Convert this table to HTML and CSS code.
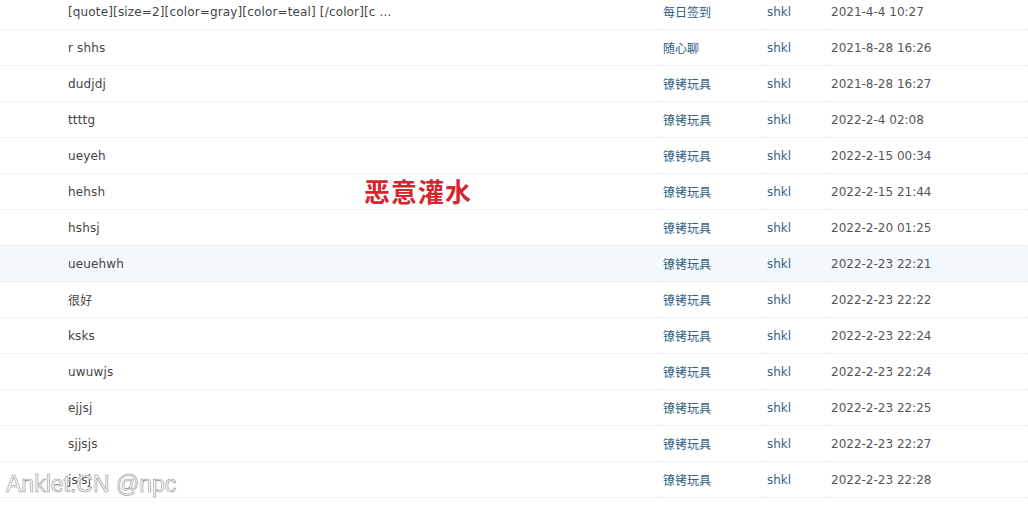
FILE: index.html
```html
<!DOCTYPE html>
<html lang="zh-CN">
<head>
  <meta charset="UTF-8">
  <title>帖子列表</title>
  <link rel="stylesheet" href="styles.css">
</head>
<body>
  <div class="wrap">
    <table class="threads">
      <tbody>
        <tr><td class="subject">[quote][size=2][color=gray][color=teal] [/color][c ...</td><td class="forum">每日签到</td><td class="author">shkl</td><td class="date">2021-4-4 10:27</td></tr>
        <tr><td class="subject">r shhs</td><td class="forum">随心聊</td><td class="author">shkl</td><td class="date">2021-8-28 16:26</td></tr>
        <tr><td class="subject">dudjdj</td><td class="forum">镣铐玩具</td><td class="author">shkl</td><td class="date">2021-8-28 16:27</td></tr>
        <tr><td class="subject">ttttg</td><td class="forum">镣铐玩具</td><td class="author">shkl</td><td class="date">2022-2-4 02:08</td></tr>
        <tr><td class="subject">ueyeh</td><td class="forum">镣铐玩具</td><td class="author">shkl</td><td class="date">2022-2-15 00:34</td></tr>
        <tr><td class="subject">hehsh</td><td class="forum">镣铐玩具</td><td class="author">shkl</td><td class="date">2022-2-15 21:44</td></tr>
        <tr><td class="subject">hshsj</td><td class="forum">镣铐玩具</td><td class="author">shkl</td><td class="date">2022-2-20 01:25</td></tr>
        <tr class="hover"><td class="subject">ueuehwh</td><td class="forum">镣铐玩具</td><td class="author">shkl</td><td class="date">2022-2-23 22:21</td></tr>
        <tr><td class="subject">很好</td><td class="forum">镣铐玩具</td><td class="author">shkl</td><td class="date">2022-2-23 22:22</td></tr>
        <tr><td class="subject">ksks</td><td class="forum">镣铐玩具</td><td class="author">shkl</td><td class="date">2022-2-23 22:24</td></tr>
        <tr><td class="subject">uwuwjs</td><td class="forum">镣铐玩具</td><td class="author">shkl</td><td class="date">2022-2-23 22:24</td></tr>
        <tr><td class="subject">ejjsj</td><td class="forum">镣铐玩具</td><td class="author">shkl</td><td class="date">2022-2-23 22:25</td></tr>
        <tr><td class="subject">sjjsjs</td><td class="forum">镣铐玩具</td><td class="author">shkl</td><td class="date">2022-2-23 22:27</td></tr>
        <tr><td class="subject">jsjsj</td><td class="forum">镣铐玩具</td><td class="author">shkl</td><td class="date">2022-2-23 22:28</td></tr>
      </tbody>
    </table>
    <div class="tag">恶意灌水</div>
    <div class="mark">Anklet.CN @npc</div>
  </div>
</body>
</html>
```

FILE: styles.css
```css
body {
  margin: 0;
  background: #fff;
  font-family: "DejaVu Sans", "Noto Sans CJK SC", sans-serif;
  font-size: 12px;
  overflow: hidden;
}
.wrap {
  position: relative;
  margin-top: -6px;
}
.threads {
  width: 100%;
  border-collapse: collapse;
  table-layout: fixed;
}
.threads td {
  height: 35px;
  padding: 0;
  border-bottom: 1px dotted #e2e2e2;
  white-space: nowrap;
  vertical-align: middle;
}
.threads tr.hover td {
  background: #f2f8fb;
}
.subject {
  width: 595px;
  padding-left: 68px !important;
  color: #444;
  letter-spacing: 0.15px;
}
.forum {
  width: 104px;
  color: #2f5e7e;
}
.author {
  width: 64px;
  color: #3b6284;
}
.date {
  color: #555;
}
.tag {
  position: absolute;
  left: 364px;
  top: 178px;
  font-size: 26px;
  font-weight: bold;
  color: #d9232e;
  letter-spacing: 1px;
}
.mark {
  position: absolute;
  left: 6px;
  top: 477px;
  font-family: "Liberation Sans", sans-serif;
  font-size: 23px;
  color: #fff;
  -webkit-text-stroke: 0.6px #8f8f8f;
}
```
